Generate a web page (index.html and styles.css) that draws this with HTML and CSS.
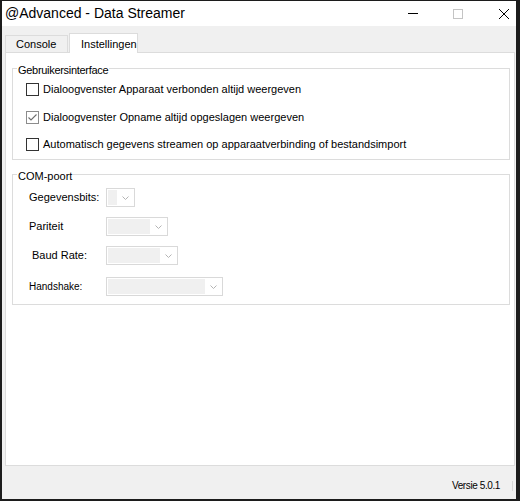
FILE: index.html
```html
<!DOCTYPE html>
<html lang="nl">
<head>
  <meta charset="UTF-8" />
  <meta name="viewport" content="width=device-width, initial-scale=1.0" />
  <title>@Advanced - Data Streamer</title>
  <link rel="stylesheet" href="styles.css">
</head>
<body>
  <div class="window">
    <div class="titlebar">
      <span class="title">@Advanced - Data Streamer</span>
      <div class="controls">
        <svg class="ctl" width="10" height="10" viewBox="0 0 10 10"><line x1="0" y1="4.5" x2="10" y2="4.5" stroke="#000" stroke-width="1"/></svg>
        <svg class="ctl" width="10" height="10" viewBox="0 0 10 10"><rect x="0.5" y="0.5" width="9" height="9" fill="none" stroke="#c4c4c4" stroke-width="1"/></svg>
        <svg class="ctl close" width="10" height="10" viewBox="0 0 10 10"><path d="M0 0 L10 10 M10 0 L0 10" stroke="#000" stroke-width="1"/></svg>
      </div>
    </div>

    <div class="tabs">
      <div class="tab">Console</div>
      <div class="tab active">Instellingen</div>
    </div>

    <div class="page">
      <div class="group group-ui">
        <div class="legend">Gebruikersinterface</div>
        <div class="checks">
          <label class="check"><span class="box"></span>Dialoogvenster Apparaat verbonden altijd weergeven</label>
          <label class="check"><span class="box checked"><svg width="11" height="11" viewBox="0 0 11 11"><polyline points="1.5,5.5 4,8 9.5,2.5" fill="none" stroke="#6e6e6e" stroke-width="1.1"/></svg></span>Dialoogvenster Opname altijd opgeslagen weergeven</label>
          <label class="check"><span class="box"></span>Automatisch gegevens streamen op apparaatverbinding of bestandsimport</label>
        </div>
      </div>

      <div class="group group-com">
        <div class="legend">COM-poort</div>
        <div class="fields">
          <div class="field">
            <span class="lbl">Gegevensbits:</span>
            <div class="combo w1"><span class="fill"></span><span class="arrow"><svg width="7" height="4" viewBox="0 0 7 4"><polyline points="0.5,0.5 3.5,3.5 6.5,0.5" fill="none" stroke="#b4b4b4" stroke-width="1"/></svg></span></div>
          </div>
          <div class="field">
            <span class="lbl">Pariteit</span>
            <div class="combo w2"><span class="fill"></span><span class="arrow"><svg width="7" height="4" viewBox="0 0 7 4"><polyline points="0.5,0.5 3.5,3.5 6.5,0.5" fill="none" stroke="#b4b4b4" stroke-width="1"/></svg></span></div>
          </div>
          <div class="field">
            <span class="lbl lbl-baud">Baud Rate:</span>
            <div class="combo w3"><span class="fill"></span><span class="arrow"><svg width="7" height="4" viewBox="0 0 7 4"><polyline points="0.5,0.5 3.5,3.5 6.5,0.5" fill="none" stroke="#b4b4b4" stroke-width="1"/></svg></span></div>
          </div>
          <div class="field field-last">
            <span class="lbl lbl-small">Handshake:</span>
            <div class="combo w4"><span class="fill"></span><span class="arrow"><svg width="7" height="4" viewBox="0 0 7 4"><polyline points="0.5,0.5 3.5,3.5 6.5,0.5" fill="none" stroke="#b4b4b4" stroke-width="1"/></svg></span></div>
          </div>
        </div>
      </div>
    </div>

    <div class="status">
      <span class="version">Versie 5.0.1</span>
      <span class="sep"></span>
    </div>
  </div>
</body>
</html>
```

FILE: styles.css
```css
body {
  margin: 0;
  font-family: 'Liberation Sans', Arial, sans-serif;
  color: #000;
  background: #fff;
}
.window {
  width: 520px;
  height: 501px;
  box-sizing: border-box;
  border-style: solid;
  border-color: #1c1c1c;
  border-width: 1px 4px 2px 2px;
  background: #f0f0f0;
  display: flex;
  flex-direction: column;
}
.titlebar {
  height: 25px;
  flex: none;
  background: #fff;
  display: flex;
  align-items: center;
  padding: 0 7px 0 3px;
}
.title {
  font-size: 14px;
  line-height: 25px;
}
.controls {
  margin-left: auto;
  display: flex;
  align-items: center;
  gap: 35px;
}
.ctl {
  display: block;
}
.close {
  margin-left: 1px;
}
.tabs {
  height: 26px;
  flex: none;
  display: flex;
  align-items: flex-end;
  padding-left: 3px;
}
.tab {
  box-sizing: border-box;
  height: 17px;
  width: 63px;
  padding: 2px 0 0 10px;
  font-size: 11px;
  line-height: 13px;
  border: 1px solid #dcdcdc;
  border-bottom: none;
  background: #f0f0f0;
  white-space: nowrap;
}
.tab.active {
  position: relative;
  z-index: 1;
  height: 20px;
  width: 69px;
  margin-left: 1px;
  margin-bottom: -1px;
  padding: 4px 0 0 11px;
  background: #fff;
}
.page {
  flex: 1;
  margin: 0 1px 0 3px;
  background: #fff;
  border: 1px solid #dcdcdc;
  display: flex;
  flex-direction: column;
}
.group {
  border: 1px solid #dcdcdc;
  margin: 15px 4px 0 6px;
  padding: 0 0 8px 13px;
}
.group-com {
  margin-top: 14px;
  padding-left: 16px;
}
.legend {
  width: max-content;
  margin: -5px 0 0 -9px;
  padding: 0 1px;
  background: #fff;
  font-size: 11px;
  line-height: 13px;
  letter-spacing: -0.3px;
}
.group-com .legend {
  margin-left: -12px;
  letter-spacing: 0;
}
.checks {
  display: flex;
  flex-direction: column;
  gap: 14.5px;
  margin-top: 6px;
}
.check {
  display: flex;
  align-items: center;
  height: 13px;
  font-size: 11px;
  line-height: 13px;
  white-space: nowrap;
}
.box {
  box-sizing: border-box;
  width: 13px;
  height: 13px;
  border: 1px solid #333;
  background: #fff;
  margin-right: 4px;
  flex: none;
  display: flex;
}
.box.checked {
  border-color: #8c8c8c;
}
.fields {
  display: flex;
  flex-direction: column;
  gap: 10px;
  margin-top: 5px;
}
.field {
  display: flex;
  align-items: center;
  height: 19px;
}
.field-last {
  margin-top: 2px;
}
.lbl {
  width: 77px;
  font-size: 11px;
  line-height: 13px;
  white-space: nowrap;
}
.lbl-baud {
  width: 74px;
  padding-left: 3px;
}
.lbl-small {
  font-size: 10px;
}
.combo {
  box-sizing: border-box;
  height: 19px;
  border: 1px solid #d9d9d9;
  padding: 1px 0 1px 1px;
  display: flex;
  background: #fff;
}
.combo .fill {
  flex: 1;
  background: #f0f0f0;
}
.combo .arrow {
  width: 17px;
  display: flex;
  align-items: center;
  justify-content: center;
}
.w1 { width: 29px; }
.w2 { width: 62px; }
.w3 { width: 72px; }
.w4 { width: 117px; }
.status {
  height: 33px;
  flex: none;
  display: flex;
  justify-content: flex-end;
  align-items: flex-end;
  padding: 0 3px 7px 0;
  box-sizing: border-box;
}
.version {
  font-size: 10px;
  line-height: 12px;
  letter-spacing: -0.4px;
}
.sep {
  width: 1px;
  height: 10px;
  background: #d6d6d6;
  margin: 0 0 1px 12px;
}
```
